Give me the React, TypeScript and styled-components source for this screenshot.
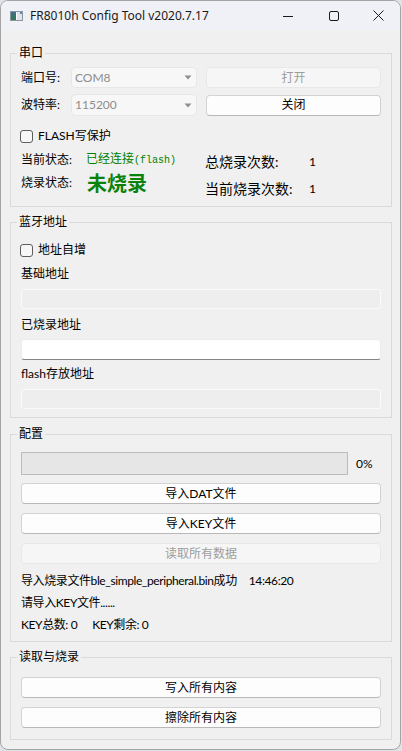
import styled, { createGlobalStyle } from "styled-components";

const GlobalStyle = createGlobalStyle`
  html, body {
    margin: 0;
    padding: 0;
    background: #dfe2e6;
  }
`;

const Window = styled.div`
  width: 401px;
  height: 750px;
  box-sizing: border-box;
  border: 1px solid #a5a5a5;
  border-radius: 8px;
  overflow: hidden;
  background: #f0f0f0;
  display: flex;
  flex-direction: column;
  font-family: Lato, "Noto Sans CJK SC", sans-serif;
  font-size: 12px;
  line-height: 16px;
  color: #000;
`;

const TitleBar = styled.div`
  flex: none;
  height: 29px;
  display: flex;
  align-items: center;
  padding-left: 9px;
  background: #eff1f7;
`;

const AppIcon = styled.svg`
  flex: none;
  margin-right: 7px;
`;

const TitleText = styled.span`
  font-family: "Noto Sans", "Liberation Sans", sans-serif;
  font-size: 12px;
  color: #1b1b1b;
`;

const Captions = styled.div`
  margin-left: auto;
  display: flex;
  height: 100%;
`;

const CaptionButton = styled.div<{ $w: number }>`
  width: ${(p) => p.$w}px;
  height: 100%;
  display: flex;
  align-items: center;
  justify-content: center;
`;

const Body = styled.div`
  flex: 1;
  display: flex;
  flex-direction: column;
  padding: 15px 8px 0 9px;
`;

const Group = styled.fieldset<{ $mt?: number; $pb: number }>`
  margin: ${(p) => p.$mt ?? 0}px 0 0;
  padding: 0 10px ${(p) => p.$pb}px 10px;
  border: 1px solid #dadada;
  min-width: 0;
  display: flex;
  flex-direction: column;
`;

const Legend = styled.legend`
  margin-left: -4px;
  padding: 0 2px;
  font-size: 12px;
  line-height: 16px;
`;

const Row = styled.div<{ $mt: number; $h?: number }>`
  flex: none;
  display: flex;
  align-items: center;
  margin-top: ${(p) => p.$mt}px;
  height: ${(p) => p.$h ?? 16}px;
`;

const LogLine = styled(Row)`
  letter-spacing: -0.4px;
`;

const FieldLabel = styled.span`
  flex: none;
  width: 50px;
`;

const Combo = styled.div<{ $h: number }>`
  flex: none;
  box-sizing: border-box;
  width: 126px;
  height: ${(p) => p.$h}px;
  display: flex;
  align-items: center;
  justify-content: space-between;
  padding: 0 4px 0 3px;
  background: #f7f7f7;
  border: 1px solid #e7e7e7;
  border-radius: 4px;
  color: #8d8d8d;
`;

const Button = styled.button<{ $h?: number }>`
  flex: 1;
  box-sizing: border-box;
  height: ${(p) => p.$h ?? 21}px;
  margin: 0;
  padding: 0;
  font: inherit;
  color: #000;
  background: #fdfdfd;
  border: 1px solid #d3d3d3;
  border-bottom-color: #b9b9b9;
  border-radius: 4px;

  &:disabled {
    color: #9d9d9d;
    background: #f6f6f6;
    border-color: #e8e8e8;
  }
`;

const WideButton = styled(Button)<{ $mt: number }>`
  flex: none;
  width: 100%;
  margin-top: ${(p) => p.$mt}px;
`;

const Box = styled.span`
  flex: none;
  box-sizing: border-box;
  width: 13px;
  height: 13px;
  margin: 0 5px 0 -1px;
  border: 1px solid #5d5d5d;
  border-radius: 3px;
  background: #f7f7f7;
`;

const StatusGrid = styled.div`
  flex: none;
  display: grid;
  grid-template-columns: 184px 1fr;
`;

const StatusCol = styled.div<{ $pt: number }>`
  display: flex;
  flex-direction: column;
  padding-top: ${(p) => p.$pt}px;
`;

const StatusLabel = styled.span<{ $w: number; $size?: number }>`
  flex: none;
  width: ${(p) => p.$w}px;
  font-size: ${(p) => p.$size ?? 12}px;
`;

const Connected = styled.span`
  color: #008000;
  .mono {
    font-family: "Liberation Mono", monospace;
    font-size: 10px;
  }
`;

const BigStatus = styled.span`
  color: #0b820b;
  font-size: 20px;
  font-weight: 700;
  line-height: 24px;
`;

const TextInput = styled.div<{ $mt: number; $enabled?: boolean }>`
  flex: none;
  box-sizing: border-box;
  height: ${(p) => (p.$enabled ? 21 : 20)}px;
  margin-top: ${(p) => p.$mt}px;
  border-radius: 3px;
  border: 1px solid ${(p) => (p.$enabled ? "#ececec" : "#fafafa")};
  border-bottom-color: ${(p) => (p.$enabled ? "#858585" : "#fafafa")};
  background: ${(p) => (p.$enabled ? "#ffffff" : "#eeeeee")};
`;

const Progress = styled.div`
  flex: 1;
  box-sizing: border-box;
  height: 23px;
  background: #e6e6e6;
  border: 1px solid #bcbcbc;
`;

const Percent = styled.span`
  flex: none;
  width: 25px;
  margin-left: 8px;
`;

const Gap = styled.span<{ $w: number }>`
  display: inline-block;
  width: ${(p) => p.$w}px;
`;

const ComboArrow = () => (
  <svg width="8" height="5" viewBox="0 0 8 5">
    <path d="M0.5 0.5 L7.5 0.5 L4 4.5 Z" fill="#8e8e8e" />
  </svg>
);

export default function App() {
  return (
    <>
      <GlobalStyle />
      <Window>
        <TitleBar>
          <AppIcon width="13" height="10" viewBox="0 0 13 10">
            <defs>
              <linearGradient id="ic" x1="0" y1="0" x2="0" y2="1">
                <stop offset="0" stopColor="#3e6f8c" />
                <stop offset="1" stopColor="#2f7a4e" />
              </linearGradient>
            </defs>
            <rect x="0.5" y="0.5" width="12" height="9" fill="#dfe4e8" stroke="#8c959c" />
            <rect x="1" y="1" width="5" height="8" fill="url(#ic)" />
            <rect x="6" y="1" width="1" height="8" fill="#ffffff" />
            <rect x="10" y="1" width="2" height="2" fill="#5b8fc8" />
          </AppIcon>
          <TitleText>FR8010h Config Tool v2020.7.17</TitleText>
          <Captions>
            <CaptionButton $w={46}>
              <svg width="10" height="10" viewBox="0 0 10 10">
                <path d="M0 5.5 H10" stroke="#1a1a1a" strokeWidth="1" />
              </svg>
            </CaptionButton>
            <CaptionButton $w={46}>
              <svg width="10" height="10" viewBox="0 0 10 10">
                <rect x="0.5" y="0.5" width="9" height="9" rx="1.5" fill="none" stroke="#1a1a1a" />
              </svg>
            </CaptionButton>
            <CaptionButton $w={43}>
              <svg width="11" height="11" viewBox="0 0 11 11">
                <path d="M0.5 0.5 L10.5 10.5 M10.5 0.5 L0.5 10.5" stroke="#1a1a1a" strokeWidth="1" />
              </svg>
            </CaptionButton>
          </Captions>
        </TitleBar>

        <Body>
          <Group $pb={9}>
            <Legend>串口</Legend>
            <Row $mt={6} $h={21}>
              <FieldLabel>端口号:</FieldLabel>
              <Combo $h={21}>
                <span>COM8</span>
                <ComboArrow />
              </Combo>
              <Gap $w={9} />
              <Button disabled>打开</Button>
            </Row>
            <Row $mt={6} $h={22}>
              <FieldLabel>波特率:</FieldLabel>
              <Combo $h={22}>
                <span>115200</span>
                <ComboArrow />
              </Combo>
              <Gap $w={9} />
              <Button>关闭</Button>
            </Row>
            <Row $mt={12}>
              <Box />
              <span>FLASH写保护</span>
            </Row>
            <StatusGrid>
              <StatusCol $pt={8}>
                <Row $mt={0}>
                  <StatusLabel $w={65}>当前状态:</StatusLabel>
                  <Connected>
                    已经连接<span className="mono">(flash)</span>
                  </Connected>
                </Row>
                <Row $mt={3} $h={24}>
                  <StatusLabel $w={66}>烧录状态:</StatusLabel>
                  <BigStatus>未烧录</BigStatus>
                </Row>
              </StatusCol>
              <StatusCol $pt={10}>
                <Row $mt={0}>
                  <StatusLabel $w={104} $size={14}>总烧录次数:</StatusLabel>
                  <span>1</span>
                </Row>
                <Row $mt={11}>
                  <StatusLabel $w={104} $size={14}>当前烧录次数:</StatusLabel>
                  <span>1</span>
                </Row>
              </StatusCol>
            </StatusGrid>
          </Group>

          <Group $mt={7} $pb={8}>
            <Legend>蓝牙地址</Legend>
            <Row $mt={12}>
              <Box />
              <span>地址自增</span>
            </Row>
            <Row $mt={8}>基础地址</Row>
            <TextInput $mt={7} />
            <Row $mt={8}>已烧录地址</Row>
            <TextInput $mt={6} $enabled />
            <Row $mt={6}>flash存放地址</Row>
            <TextInput $mt={7} />
          </Group>

          <Group $mt={8} $pb={8}>
            <Legend>配置</Legend>
            <Row $mt={10} $h={23}>
              <Progress />
              <Percent>0%</Percent>
            </Row>
            <WideButton $mt={8}>导入DAT文件</WideButton>
            <WideButton $mt={9}>导入KEY文件</WideButton>
            <WideButton $mt={9} disabled>
              读取所有数据
            </WideButton>
            <LogLine $mt={9}>
              导入烧录文件ble_simple_peripheral.bin成功
              <Gap $w={12} />
              14:46:20
            </LogLine>
            <LogLine $mt={6}>请导入KEY文件......</LogLine>
            <LogLine $mt={6}>
              KEY总数: 0
              <Gap $w={15} />
              KEY剩余: 0
            </LogLine>
          </Group>

          <Group $mt={7} $pb={11}>
            <Legend>读取与烧录</Legend>
            <WideButton $mt={12}>写入所有内容</WideButton>
            <WideButton $mt={9}>擦除所有内容</WideButton>
          </Group>
        </Body>
      </Window>
    </>
  );
}
